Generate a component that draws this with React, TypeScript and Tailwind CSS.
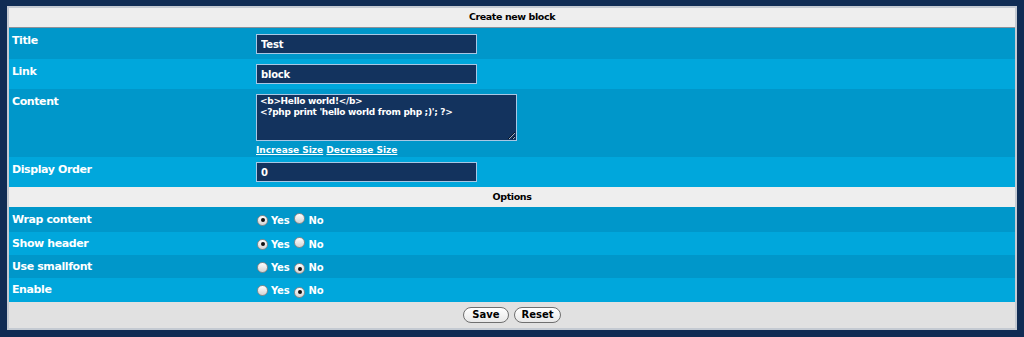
import React from "react";

const font = { fontFamily: '"DejaVu Sans", Verdana, sans-serif' };

type Opt = { label: string; yes: boolean };

const options: Opt[] = [
  { label: "Wrap content", yes: true },
  { label: "Show header", yes: true },
  { label: "Use smallfont", yes: false },
  { label: "Enable", yes: false },
];

function Radio({ checked }: { checked: boolean }) {
  return (
    <span className="relative inline-flex w-[11px] h-[11px] rounded-full border border-[#8a8a8a] bg-gradient-to-b from-white to-[#d4d4d4] items-center justify-center shrink-0">
      {checked && <span className="w-[4px] h-[4px] rounded-full bg-[#111]" />}
    </span>
  );
}

function Label({ children }: { children: React.ReactNode }) {
  return <div className="pl-[3px] text-[11px] font-bold leading-[16px] tracking-[-0.4px] text-white">{children}</div>;
}

function TextInput({ value }: { value: string }) {
  return (
    <input
      readOnly
      value={value}
      className="block w-[221px] h-[20px] bg-[#13335e] border border-[#a9c7e4] px-[4px] text-[10px] font-bold tracking-[-0.2px] text-white outline-none"
      style={font}
    />
  );
}

export default function App() {
  const rowDark = "bg-[#0097ca]";
  const rowLight = "bg-[#00a7dc]";

  return (
    <div className="w-[1024px] h-[337px] bg-[#102c54] pt-[6px] px-[7px]" style={font}>
      <div className="border-2 border-[#c4cad2] bg-[#0097ca]">
        {/* Header */}
        <div className="h-[20px] bg-[#eeeeee] border-b border-[#8d9199] flex items-center justify-center text-[9.5px] font-bold tracking-[-0.4px] text-black">
          Create new block
        </div>

        {/* Text fields */}
        <div className={`grid grid-cols-[244px_1fr] pt-[5px] h-[31px] ${rowDark}`}>
          <Label>Title</Label>
          <div className="pl-[3px] pt-px"><TextInput value="Test" /></div>
        </div>
        <div className={`grid grid-cols-[244px_1fr] pt-[5px] h-[30px] ${rowLight}`}>
          <Label>Link</Label>
          <div className="pl-[3px]"><TextInput value="block" /></div>
        </div>
        <div className={`grid grid-cols-[244px_1fr] pt-[5px] h-[68px] ${rowDark}`}>
          <Label>Content</Label>
          <div className="pl-[3px]">
            <textarea
              readOnly
              value={"<b>Hello world!</b>\n<?php print 'hello world from php ;)'; ?>"}
              className="block w-[261px] h-[47px] bg-[#13335e] border border-[#a9c7e4] px-[3px] py-[1px] text-[9px] font-bold leading-[11px] tracking-[-0.3px] text-white outline-none resize"
              style={font}
            />
            <div className="mt-[3px] text-[9px] font-bold leading-[12px] text-white">
              <span className="underline">Increase Size</span> <span className="underline">Decrease Size</span>
            </div>
          </div>
        </div>
        <div className={`grid grid-cols-[244px_1fr] pt-[5px] h-[30px] ${rowLight}`}>
          <Label>Display Order</Label>
          <div className="pl-[3px]"><TextInput value="0" /></div>
        </div>

        {/* Options */}
        <div className="h-[20px] bg-[#eeeeee] flex items-center justify-center text-[9.5px] font-bold tracking-[-0.4px] text-black">
          Options
        </div>
        {options.map((o, i) => (
          <div
            key={o.label}
            className={`grid grid-cols-[244px_1fr] items-center ${i === 0 ? "h-[25px]" : i === 3 ? "h-[24px]" : "h-[23px]"} ${i % 2 === 0 ? rowDark : rowLight}`}
          >
            <Label>{o.label}</Label>
            <div className="pl-[4px] pt-px flex items-center text-[10px] font-bold tracking-[-0.2px] text-white">
              <Radio checked={o.yes} />
              <span className="ml-[3px]">Yes</span>
              <span className="ml-[5px]"><Radio checked={!o.yes} /></span>
              <span className="ml-[3px]">No</span>
            </div>
          </div>
        ))}

        {/* Footer */}
        <div className="h-[26px] bg-[#e1e1e1] flex items-center justify-center gap-[5px]">
          <button className="w-[46px] h-[16px] rounded-full border border-[#6f6f6f] bg-gradient-to-b from-white to-[#e8e8e8] text-[10px] font-bold leading-[14px] text-black">
            Save
          </button>
          <button className="w-[47px] h-[16px] rounded-full border border-[#6f6f6f] bg-gradient-to-b from-white to-[#e8e8e8] text-[10px] font-bold leading-[14px] text-black">
            Reset
          </button>
        </div>
      </div>
    </div>
  );
}
